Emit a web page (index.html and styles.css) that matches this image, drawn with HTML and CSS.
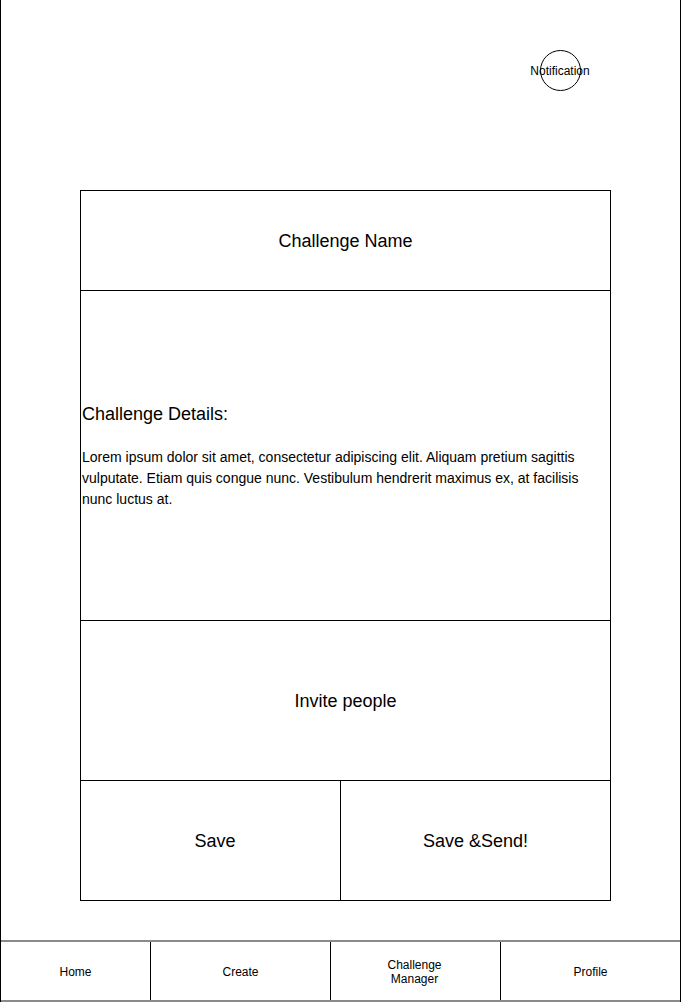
FILE: index.html
```html
<!DOCTYPE html>
<html>
<head>
<meta charset="utf-8">
<link rel="stylesheet" href="styles.css">
</head>
<body>
<div class="page">
  <header class="topbar">
    <div class="notif"><span>Notification</span></div>
  </header>
  <main class="card">
    <div class="row row-name">Challenge Name</div>
    <div class="row row-details">
      <h2 class="details-title">Challenge Details:</h2>
      <p class="details-text">Lorem ipsum dolor sit amet, consectetur adipiscing elit. Aliquam pretium sagittis vulputate. Etiam quis congue nunc. Vestibulum hendrerit maximus ex, at facilisis nunc luctus at.</p>
    </div>
    <div class="row row-invite">Invite people</div>
    <div class="row row-actions">
      <div class="action action-save">Save</div>
      <div class="action action-send">Save &amp;Send!</div>
    </div>
  </main>
  <nav class="nav">
    <div class="nav-item nav-home">Home</div>
    <div class="nav-item nav-create">Create</div>
    <div class="nav-item nav-manager">Challenge<br>Manager</div>
    <div class="nav-item nav-profile">Profile</div>
  </nav>
</div>
</body>
</html>
```

FILE: styles.css
```css
* { box-sizing: border-box; }
html, body { margin: 0; padding: 0; background: #fff; }
body {
  font-family: "Liberation Sans", Arial, sans-serif;
  color: #000;
}
.page {
  width: 681px;
  height: 1002px;
  border-left: 1px solid #000;
  border-right: 1px solid #000;
  display: flex;
  flex-direction: column;
}
.topbar {
  height: 190px;
  display: flex;
  justify-content: flex-end;
  align-items: flex-start;
  padding-top: 50px;
  padding-right: 99px;
}
.notif {
  width: 41px;
  height: 41px;
  border: 1px solid #000;
  border-radius: 50%;
  display: flex;
  align-items: center;
  justify-content: center;
  font-size: 12px;
  line-height: 14px;
  white-space: nowrap;
}
.notif span { padding-top: 1px; padding-right: 1px; }
.card {
  margin-left: 79px;
  width: 531px;
  border: 1px solid #000;
  display: flex;
  flex-direction: column;
}
.row {
  border-bottom: 1px solid #000;
  display: flex;
  align-items: center;
  justify-content: center;
  font-size: 18px;
}
.row-name { height: 100px; padding-top: 2px; }
.row-details {
  height: 330px;
  flex-direction: column;
  align-items: stretch;
  justify-content: center;
  padding: 3px 2px 0 1px;
}
.details-title {
  margin: 0;
  font-size: 18px;
  font-weight: normal;
  line-height: 21px;
}
.details-text {
  margin: 22px 0 0 0;
  font-size: 14px;
  line-height: 21px;
}
.row-invite { height: 160px; padding-top: 2px; }
.row-actions {
  height: 119px;
  border-bottom: none;
  align-items: stretch;
}
.action {
  display: flex;
  align-items: center;
  justify-content: center;
  padding-top: 2px;
}
.action-save { width: 260px; border-right: 1px solid #000; padding-left: 9px; }
.action-send { flex: 1; }
.nav {
  margin-top: 39px;
  height: 62px;
  border-top: 2px solid #8a8a8a;
  border-bottom: 2px solid #8a8a8a;
  display: flex;
  font-size: 12px;
  line-height: 14px;
}
.nav-item {
  display: flex;
  align-items: center;
  justify-content: center;
  text-align: center;
  padding-top: 2px;
}
.nav-home { width: 150px; border-right: 1px solid #000; }
.nav-create { width: 180px; border-right: 1px solid #000; }
.nav-manager { width: 170px; border-right: 1px solid #000; padding-right: 2px; }
.nav-profile { flex: 1; }
```
